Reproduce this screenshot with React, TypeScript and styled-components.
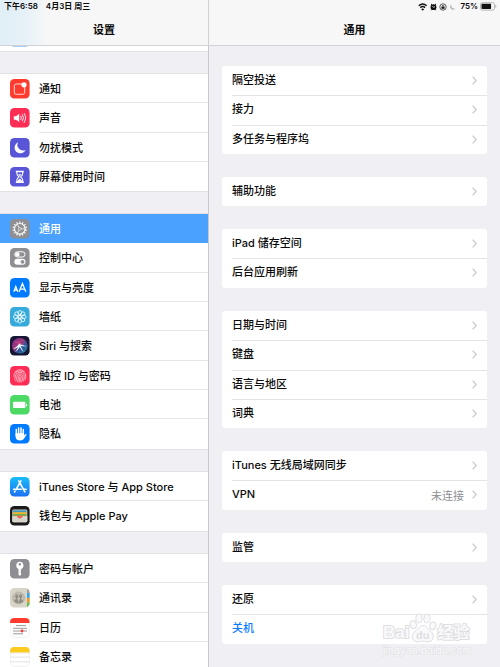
import React from "react";
import styled, { createGlobalStyle } from "styled-components";

const GlobalStyle = createGlobalStyle`
  * { box-sizing: border-box; }
  html, body { margin: 0; background: #efeff4; }
  body {
    font-family: Inter, "Noto Sans CJK SC", sans-serif;
    font-size: 11px;
    color: #0a0a0a;
  }
  ul, h1, h2 { margin: 0; padding: 0; list-style: none; }
`;

const Screen = styled.div`
  position: relative;
  display: flex;
  flex-direction: column;
  height: 100vh;
  overflow: hidden;
`;

const TopBar = styled.header`
  flex: none;
  background:
    linear-gradient(90deg, #e0eef6 0, #e6f1f7 24px, rgba(247, 247, 247, 0) 48px),
    #f7f7f7;
  border-bottom: 1px solid #d2d2d6;
`;

const StatusBar = styled.div`
  display: flex;
  justify-content: space-between;
  height: 13px;
  padding: 0 3px 0 4px;
  font-size: 8px;
  font-weight: 600;
  line-height: 13px;
`;

const StatusLeft = styled.div`
  display: flex;
  flex: 0 0 205px;
  gap: 8px;
  border-right: 1px solid #d2d2d6;
`;

const StatusRight = styled.div`
  display: flex;
  align-items: center;
  gap: 2px;
`;

const Titles = styled.div`
  display: flex;
  height: 32px;
`;

const Title = styled.h1<{ $side?: boolean }>`
  flex: ${(p) => (p.$side ? "0 0 209px" : "1")};
  border-right: ${(p) => (p.$side ? "1px solid #d2d2d6" : "none")};
  font-size: 11px;
  font-weight: 600;
  line-height: 34px;
  text-align: center;
`;

const Panes = styled.div`
  display: flex;
  flex: 1;
  min-height: 0;
`;

const Sidebar = styled.nav`
  flex: 0 0 209px;
  overflow: auto;
  scrollbar-width: none;
  border-right: 1px solid #c8c8cc;
`;

const SideGroup = styled.ul<{ $scrolled?: boolean }>`
  margin-top: ${(p) => (p.$scrolled ? "-24px" : "23px")};
  background: #fff;
  box-shadow: 0 -1px 0 #e2e2e6, 0 1px 0 #e2e2e6;
`;

const SideItem = styled.li`
  height: 29px;
  &:nth-child(3n + 2) { height: 30px; }
`;

const SideButton = styled.button<{ $active?: boolean }>`
  display: flex;
  align-items: stretch;
  width: 100%;
  height: 100%;
  padding: 0 0 0 10px;
  border: 0;
  background: ${(p) => (p.$active ? "#4ba1ff" : "transparent")};
  color: ${(p) => (p.$active ? "#fff" : "inherit")};
  font: inherit;
  font-weight: 500;
  text-align: left;
  cursor: pointer;
  & > svg { align-self: center; flex: none; }
`;

const SideLabel = styled.span<{ $line: boolean }>`
  flex: 1;
  height: 100%;
  margin-left: 9px;
  line-height: 31px;
  box-shadow: ${(p) => (p.$line ? "inset 0 -1px 0 #e6e6e9" : "none")};
  white-space: nowrap;
`;

const Detail = styled.main`
  flex: 1;
  min-width: 0;
  overflow: auto;
  scrollbar-width: none;
  padding: 20px 13px;
`;

const Card = styled.ul`
  background: #fff;
  border-radius: 3px;
  overflow: hidden;
  & + & { margin-top: 23px; }
`;

const CardItem = styled.li`
  height: 29px;
  padding-left: 10px;
  &:nth-child(3n + 2) { height: 30px; }
  & + & > button { box-shadow: inset 0 1px 0 #e4e4e8; }
`;

const CardButton = styled.button<{ $link?: boolean }>`
  display: flex;
  align-items: center;
  gap: 8px;
  width: 100%;
  height: 29px;
  padding: 0 10px 0 0;
  border: 0;
  background: transparent;
  color: ${(p) => (p.$link ? "#0a7bff" : "inherit")};
  font: inherit;
  font-weight: 500;
  text-align: left;
  cursor: pointer;
`;

const CardLabel = styled.span`
  flex: 1;
  line-height: 29px;
`;

const Value = styled.span`
  color: #8e8e93;
  font-weight: 400;
`;

const Watermark = styled.div`
  position: absolute;
  right: 26px;
  bottom: 10px;
  width: 91px;
  pointer-events: none;
`;

const WatermarkRow = styled.div`
  display: flex;
  align-items: flex-end;
  height: 31px;
`;

const Brand = styled.span<{ $size: number }>`
  color: #f9f9fb;
  -webkit-text-stroke: 2px #dfdfe2;
  paint-order: stroke fill;
  font-family: "Liberation Sans", "Noto Sans CJK SC", sans-serif;
  font-size: ${(p) => p.$size}px;
  font-weight: 700;
  line-height: 20px;
  white-space: nowrap;
`;

const WatermarkUrl = styled.div`
  color: #fafafc;
  -webkit-text-stroke: 1px #dfdfe2;
  paint-order: stroke fill;
  font-family: "Liberation Sans", sans-serif;
  font-size: 11px;
  line-height: 14px;
  white-space: nowrap;
`;

const Tile = ({ fill, children }: { fill: string; children?: React.ReactNode }) => (
  <svg width="20" height="20" viewBox="0 0 20 20" aria-hidden="true">
    <rect width="19.6" height="19.6" rx="4.4" fill={fill} />
    {children}
  </svg>
);

const spokes = (n: number) => Array.from({ length: n }, (_, i) => (i * 360) / n);

const icons: Record<string, React.ReactNode> = {
  blue: <Tile fill="#4ba1ff" />,
  notice: (
    <Tile fill="#ff3b30">
      <path d="M12 5H6.2Q4.3 5 4.3 6.9V13.4Q4.3 15.3 6.2 15.3H12.8Q14.7 15.3 14.7 13.4V8" fill="none" stroke="#ffd9d6" strokeWidth="1" />
      <circle cx="14" cy="5.8" r="2.6" fill="#fff" />
    </Tile>
  ),
  sound: (
    <Tile fill="#ff2d55">
      <path d="M3.8 8.2H6L9.2 5.8V14L6 11.7H3.8Z" fill="#fff" />
      <path d="M10.9 8.2Q12 9.9 10.9 11.6M12.5 6.7Q14.6 9.9 12.5 13.1M14.2 5.4Q17.1 9.9 14.2 14.4" fill="none" stroke="#fff" strokeWidth=".9" strokeLinecap="round" />
    </Tile>
  ),
  moon: (
    <Tile fill="#5856d6">
      <path d="M8.2 4.3A5.7 5.7 0 1 0 15.6 11.7A5.4 5.4 0 0 1 8.2 4.3Z" fill="#fff" />
    </Tile>
  ),
  hourglass: (
    <Tile fill="#5856d6">
      <path d="M5.8 3.8H13.8V5.2H5.8ZM5.8 14.6H13.8V16H5.8Z" fill="#fff" />
      <path d="M6.9 5V6.8Q6.9 8.1 9 9.9Q6.9 11.7 6.9 13V14.8H12.7V13Q12.7 11.7 10.6 9.9Q12.7 8.1 12.7 6.8V5" fill="none" stroke="#fff" strokeWidth="1.1" />
      <path d="M8 7.2H11.6L9.8 9.3ZM9.8 11.4L11.8 13.6V14.5H7.8V13.6Z" fill="#fff" />
    </Tile>
  ),
  gear: (
    <Tile fill="#8e8e93">
      {spokes(14).map((a) => (
        <rect key={a} x="9.2" y="2.5" width="1.2" height="2.2" fill="#f4f4f4" transform={`rotate(${a} 9.8 9.8)`} />
      ))}
      <circle cx="9.8" cy="9.8" r="5.3" fill="none" stroke="#f4f4f4" strokeWidth="1.2" />
      <circle cx="9.8" cy="9.8" r="1.4" fill="none" stroke="#f4f4f4" strokeWidth=".7" />
      {[0, 120, 240].map((a) => (
        <path key={a} d="M11.3 9.8H15" stroke="#f4f4f4" strokeWidth=".8" transform={`rotate(${a} 9.8 9.8)`} />
      ))}
    </Tile>
  ),
  control: (
    <Tile fill="#8e8e93">
      <rect x="4.8" y="3.8" width="10.2" height="5.2" rx="2.6" fill="none" stroke="#fff" strokeWidth="1" />
      <circle cx="7.4" cy="6.4" r="2.2" fill="#fff" />
      <rect x="4.3" y="10.8" width="11.2" height="6" rx="3" fill="#fff" />
      <circle cx="12.5" cy="13.8" r="1.9" fill="#8e8e93" />
    </Tile>
  ),
  display: (
    <Tile fill="#007aff">
      <path d="M3.8 13.8L5.8 8.6L7.8 13.8M4.5 12.2H7.1M9.1 13.8L12.4 5.4L15.8 13.8M10.3 11.1H14.6" fill="none" stroke="#fff" strokeWidth="1.3" />
    </Tile>
  ),
  wallpaper: (
    <Tile fill="#37aadc">
      {spokes(8).map((a) => (
        <ellipse key={a} cx="9.8" cy="5.8" rx="1.8" ry="2.3" fill="none" stroke="#e8f8ff" strokeWidth=".9" transform={`rotate(${a} 9.8 9.8)`} />
      ))}
      <circle cx="9.8" cy="9.8" r="1.5" fill="none" stroke="#fff" strokeWidth=".9" />
    </Tile>
  ),
  siri: (
    <Tile fill="#171634">
      <defs>
        <linearGradient id="orb" x1="0" y1="0" x2="1" y2="1">
          <stop offset="0" stopColor="#7c35b8" />
          <stop offset=".4" stopColor="#d4458e" />
          <stop offset=".6" stopColor="#3a5db4" />
          <stop offset="1" stopColor="#1cc5c8" />
        </linearGradient>
      </defs>
      <circle cx="9.8" cy="9.8" r="7.8" fill="url(#orb)" opacity=".75" />
      <path d="M2.5 12.8Q7 11.5 9.3 7.2Q11 8.8 17 10.2Q12.5 10.6 10.6 10L13.6 16Q10.6 13.4 9.7 11Q8 14.7 5 16.2Q7.2 13.6 7.9 11.2Q6 12.8 2.5 12.8Z" fill="#dff8ff" />
      <path d="M3 6Q8 4 12 8L16 6Q14 9 11 9Q7 6 3 6Z" fill="#f23f80" opacity=".6" />
    </Tile>
  ),
  touch: (
    <Tile fill="#ff2d55">
      <g fill="none" stroke="#ffd5dd" strokeWidth=".75" strokeLinecap="round">
        <path d="M5.2 5.8Q9.8 1.3 14.4 5.8M3.8 10.5Q3.6 5.2 9.8 4.9Q16 5.2 15.8 10.5Q15.8 12.3 15 13.8" />
        <path d="M4.6 13.3Q5.3 12 5.3 10Q5.6 6.3 9.8 6.3Q14.2 6.4 14.3 10.5Q14.2 13.4 12.9 15.3" />
        <path d="M5.8 14.9Q6.9 12.8 6.8 10.4Q7 7.8 9.8 7.8Q12.7 7.9 12.8 10.5Q12.7 13.7 11 16.2" />
        <path d="M7.3 15.8Q8.4 13.4 8.3 10.8Q8.4 9.3 9.8 9.3Q11.2 9.4 11.3 10.8Q11.1 13.9 9.2 16.4M9.8 10.8Q9.8 13.2 8.9 15" />
      </g>
    </Tile>
  ),
  battery: (
    <Tile fill="#4cd964">
      <rect x="3" y="6.8" width="12.4" height="6.2" rx=".8" fill="#fff" />
      <path d="M16 8.4Q17.4 8.9 17.4 9.9Q17.4 10.9 16 11.4Z" fill="#fff" />
    </Tile>
  ),
  privacy: (
    <Tile fill="#007aff">
      <path d="M6.3 11V5.5M8.6 10V4M11 10V4M13.3 11V5.5" stroke="#fff" strokeWidth="1.5" strokeLinecap="round" />
      <path d="M5.5 9.2H14.1V11.6L15.6 10Q16.8 9.6 16.6 10.5L14 14.8Q12.8 16.6 10.5 16.6Q5.5 16.6 5.5 12Z" fill="#fff" />
    </Tile>
  ),
  store: (
    <Tile fill="url(#storeSky)">
      <defs>
        <linearGradient id="storeSky" x1="0" y1="0" x2="0" y2="1">
          <stop offset="0" stopColor="#19bdfb" />
          <stop offset="1" stopColor="#1d70f2" />
        </linearGradient>
      </defs>
      <path d="M8.8 4L14.9 14.9M10.9 4L6 12.6M5 14.2L4.6 15M3.6 12.3H11.2M13.6 12.3H16.1" stroke="#fff" strokeWidth="1.6" strokeLinecap="round" />
    </Tile>
  ),
  wallet: (
    <Tile fill="#1b1b1c">
      <rect x="2.3" y="3.6" width="15" height="12.6" rx="1.4" fill="#d9d6cd" />
      <rect x="3" y="4.3" width="13.6" height="2.4" fill="#4198bd" />
      <rect x="3" y="6.2" width="13.6" height="2" fill="#f0b52d" />
      <rect x="3" y="8" width="13.6" height="2" fill="#6cb44b" />
      <path d="M3 9.8H16.6V10.6H12.6Q12 12.7 9.8 12.7Q7.6 12.7 7 10.6H3Z" fill="#f16a5c" />
      <path d="M2.3 10.2H6.8Q7.5 12.7 9.8 12.7Q12.1 12.7 12.8 10.2H17.3V15Q17.3 16.2 16 16.2H3.6Q2.3 16.2 2.3 15Z" fill="#d9d6cd" />
      <path d="M7 9.8H12.6Q12 12.4 9.8 12.4Q7.6 12.4 7 9.8Z" fill="#f16a5c" />
    </Tile>
  ),
  key: (
    <Tile fill="#8e8e93">
      <path fillRule="evenodd" d="M9.8 2.8A3.7 3.7 0 0 1 11.2 9.9V11L10.4 11.8L11.2 12.6L10.4 13.4L11.2 14.2V15.4L9.8 17L8.5 15.6V9.9A3.7 3.7 0 0 1 9.8 2.8ZM9.8 4A1.2 1.2 0 1 0 9.8 6.4A1.2 1.2 0 1 0 9.8 4Z" fill="#fff" />
    </Tile>
  ),
  contacts: (
    <Tile fill="#d8d4c8">
      <path d="M17 .8Q19.6 1.6 19.6 4.4V5H17Z" fill="#a5a59c" />
      <path d="M17 5H19.6V10H17Z" fill="#37a8e8" />
      <path d="M17 10H19.6V14.6H17Z" fill="#f59a23" />
      <path d="M17 14.6H19.6Q19.6 18.2 17 18.9Z" fill="#62bd50" />
      <circle cx="8.6" cy="9.9" r="6" fill="#c2beb2" stroke="#a9a59a" strokeWidth=".6" />
      <ellipse cx="6.7" cy="8.3" rx="1.5" ry="2" fill="#918d83" />
      <ellipse cx="10.6" cy="8.3" rx="1.5" ry="2" fill="#918d83" />
      <path d="M3.9 13.2Q4.6 11.4 6.7 11Q8.2 11.3 8.4 13.6V15.2Q5.6 15.2 3.9 13.2ZM13.4 13.2Q12.7 11.4 10.6 11Q9.1 11.3 8.9 13.6V15.2Q11.7 15.2 13.4 13.2Z" fill="#918d83" />
      <path d="M6.2 9.8H7.2V11.4H6.2ZM10.1 9.8H11.1V11.4H10.1Z" fill="#918d83" />
    </Tile>
  ),
  calendar: (
    <Tile fill="#fff">
      <rect x=".2" y=".2" width="19.2" height="19.2" rx="4.2" fill="none" stroke="#dcdcde" strokeWidth=".4" />
      <path d="M0 4.9V4.4Q0 0 4.4 0H15.2Q19.6 0 19.6 4.4V4.9Z" fill="#ff3b30" />
      <path d="M6.5 7.6H16.5M3.5 10.3H16.5M3.5 13H16.5M3.5 15.8H12.5" stroke="#333" strokeWidth="1" strokeDasharray="1 1" />
      <circle cx="12" cy="13" r="1.4" fill="#ff3b30" />
    </Tile>
  ),
  notes: (
    <Tile fill="#fff">
      <rect x=".2" y=".2" width="19.2" height="19.2" rx="4.2" fill="none" stroke="#dcdcde" strokeWidth=".4" />
      <path d="M0 5.6V4.4Q0 0 4.4 0H15.2Q19.6 0 19.6 4.4V5.6Z" fill="#fbcb1e" />
      <path d="M0 6.1H19.6" stroke="#c9c4b4" strokeWidth=".6" strokeDasharray=".6 .5" />
      <path d="M0 10.1H19.6M0 14.8H19.6" stroke="#dcdcdc" strokeWidth=".8" />
    </Tile>
  ),
};

type SideRow = { icon: string; label: string; active?: boolean };

const sideGroups: SideRow[][] = [
  [
    { icon: "notice", label: "通知" },
    { icon: "sound", label: "声音" },
    { icon: "moon", label: "勿扰模式" },
    { icon: "hourglass", label: "屏幕使用时间" },
  ],
  [
    { icon: "gear", label: "通用", active: true },
    { icon: "control", label: "控制中心" },
    { icon: "display", label: "显示与亮度" },
    { icon: "wallpaper", label: "墙纸" },
    { icon: "siri", label: "Siri 与搜索" },
    { icon: "touch", label: "触控 ID 与密码" },
    { icon: "battery", label: "电池" },
    { icon: "privacy", label: "隐私" },
  ],
  [
    { icon: "store", label: "iTunes Store 与 App Store" },
    { icon: "wallet", label: "钱包与 Apple Pay" },
  ],
  [
    { icon: "key", label: "密码与帐户" },
    { icon: "contacts", label: "通讯录" },
    { icon: "calendar", label: "日历" },
    { icon: "notes", label: "备忘录" },
  ],
];

type CardRow = { label: string; value?: string; link?: boolean };

const cards: CardRow[][] = [
  [{ label: "隔空投送" }, { label: "接力" }, { label: "多任务与程序坞" }],
  [{ label: "辅助功能" }],
  [{ label: "iPad 储存空间" }, { label: "后台应用刷新" }],
  [{ label: "日期与时间" }, { label: "键盘" }, { label: "语言与地区" }, { label: "词典" }],
  [{ label: "iTunes 无线局域网同步" }, { label: "VPN", value: "未连接" }],
  [{ label: "监管" }],
  [{ label: "还原" }, { label: "关机", link: true }],
];

const Chevron = () => (
  <svg width="5" height="9" viewBox="0 0 5 9" aria-hidden="true">
    <path d="M.6 .6L4.3 4.5L.6 8.4" fill="none" stroke="#c4c4c9" strokeWidth="1.1" />
  </svg>
);

const StatusIcons = () => (
  <svg width="40" height="10" viewBox="0 0 40 10" aria-hidden="true">
    <g fill="none" stroke="#111" strokeWidth="1.4">
      <path d="M.7 3.7Q4.7 .2 8.7 3.7M2.3 5.6Q4.7 3.5 7.1 5.6" />
    </g>
    <path d="M3.2 7.2Q4.7 5.9 6.2 7.2L4.7 8.8Z" fill="#111" />
    <circle cx="15.5" cy="5.2" r="2.9" fill="#111" />
    <path d="M12.9 2.9L14 1.9M18.1 2.9L17 1.9M13.9 7.3L13.2 8.2M17.1 7.3L17.8 8.2" stroke="#111" strokeWidth="1" />
    <path d="M14.3 4L15.5 5.4L17 4.7" fill="none" stroke="#fff" strokeWidth=".7" />
    <circle cx="25" cy="5" r="3.2" fill="none" stroke="#333" strokeWidth=".8" />
    <rect x="23.5" y="4.6" width="3" height="2.2" fill="#111" />
    <path d="M24.1 4.7V3.8Q25 2.8 25.9 3.8V4.7" fill="none" stroke="#111" strokeWidth=".6" />
    <path d="M33.3 2.2A3.1 3.1 0 1 0 37.6 6.6A3.5 3.5 0 0 1 33.3 2.2Z" fill="#b4b4b6" />
  </svg>
);

const BatteryLevel = () => (
  <svg width="17" height="9" viewBox="0 0 17 9" aria-hidden="true">
    <rect x=".5" y=".7" width="14" height="7.4" rx="1.8" fill="none" stroke="#a4a4a6" strokeWidth=".8" />
    <rect x="1.5" y="1.8" width="9.6" height="5.2" rx=".7" fill="#111" />
    <path d="M15.4 3V5.8Q16.4 5.4 16.4 4.4Q16.4 3.4 15.4 3Z" fill="#a4a4a6" />
  </svg>
);

const Paw = () => (
  <svg width="28" height="30" viewBox="0 0 28 30" aria-hidden="true">
    <g fill="#f9f9fb" stroke="#dfdfe2" strokeWidth="1">
      <ellipse cx="10" cy="5.4" rx="3.1" ry="4.4" />
      <ellipse cx="18" cy="5.6" rx="3.1" ry="4.3" transform="rotate(12 18 5.6)" />
      <ellipse cx="4.3" cy="11.6" rx="3.1" ry="3.9" transform="rotate(-15 4.3 11.6)" />
      <ellipse cx="23.8" cy="12.8" rx="3.1" ry="3.9" transform="rotate(12 23.8 12.8)" />
      <path d="M14 12.4C17.6 12.4 18.8 16.2 22 18.6C25.4 21.2 25.2 28.4 19.4 28.8C16.8 29 15.8 28.2 14 28.2C12.2 28.2 10.6 29 8 28.8C2.4 28.4 2 21.4 5.8 18.6C9 16.2 10.2 12.4 14 12.4Z" />
    </g>
    <text x="13.8" y="26.4" textAnchor="middle" fontFamily="Liberation Sans, sans-serif" fontSize="11" fontWeight="700" fill="#dfdfe2">du</text>
  </svg>
);

export default function App() {
  return (
    <>
      <GlobalStyle />
      <Screen>
        <TopBar>
          <StatusBar>
            <StatusLeft>
              <span>下午6:58</span>
              <span>4月3日 周三</span>
            </StatusLeft>
            <StatusRight>
              <StatusIcons />
              <span>75%</span>
              <BatteryLevel />
            </StatusRight>
          </StatusBar>
          <Titles>
            <Title $side>设置</Title>
            <Title as="h2">通用</Title>
          </Titles>
        </TopBar>
        <Panes>
          <Sidebar>
            <SideGroup $scrolled>
              <SideItem>
                <SideButton aria-label="iCloud">{icons.blue}</SideButton>
              </SideItem>
            </SideGroup>
            {sideGroups.map((group, g) => (
              <SideGroup key={g}>
                {group.map((row, i) => (
                  <SideItem key={row.label}>
                    <SideButton $active={row.active} aria-current={row.active ? "page" : undefined}>
                      {icons[row.icon]}
                      <SideLabel $line={!row.active && i < group.length - 1}>{row.label}</SideLabel>
                    </SideButton>
                  </SideItem>
                ))}
              </SideGroup>
            ))}
          </Sidebar>
          <Detail>
            {cards.map((card, c) => (
              <Card key={c}>
                {card.map((row) => (
                  <CardItem key={row.label}>
                    <CardButton $link={row.link}>
                      <CardLabel>{row.label}</CardLabel>
                      {row.value && <Value>{row.value}</Value>}
                      {!row.link && <Chevron />}
                    </CardButton>
                  </CardItem>
                ))}
              </Card>
            ))}
          </Detail>
        </Panes>
        <Watermark>
          <WatermarkRow>
            <Brand $size={17}>Bai</Brand>
            <Paw />
            <Brand $size={16}>经验</Brand>
          </WatermarkRow>
          <WatermarkUrl>jingyan.baidu.com</WatermarkUrl>
        </Watermark>
      </Screen>
    </>
  );
}
